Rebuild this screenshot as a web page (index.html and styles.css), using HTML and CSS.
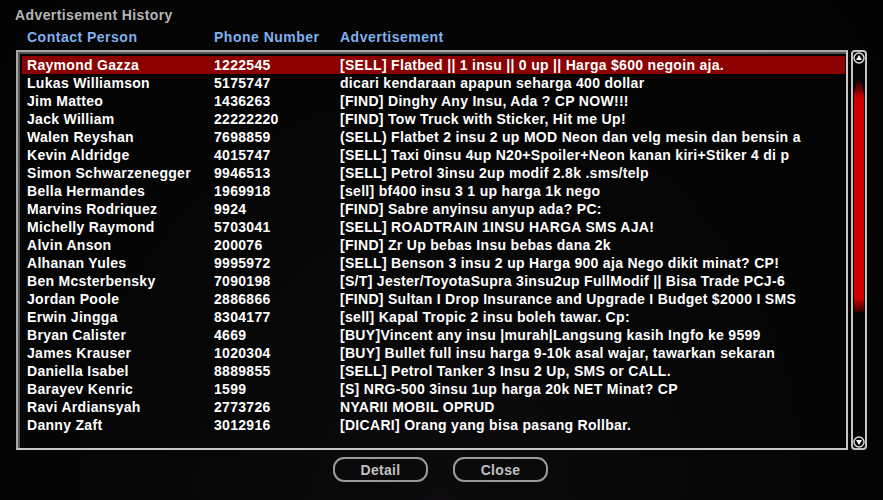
FILE: index.html
```html
<!DOCTYPE html>
<html lang="en">
<head>
  <meta charset="UTF-8" />
  <title>Advertisement History</title>
  <link rel="stylesheet" href="styles.css">
</head>
<body>
  <div class="dialog">
    <div class="title">Advertisement History</div>

    <div class="head">
      <span>Contact Person</span>
      <span>Phone Number</span>
      <span>Advertisement</span>
    </div>

    <div class="listwrap">
      <div class="list" id="list"></div>
      <div class="scroll">
        <div class="arrow up"><svg viewBox="0 0 12 12" width="12" height="12"><circle cx="6" cy="6" r="5" fill="none" stroke="#ddd" stroke-width="1.4"/><path d="M6 3 L9 8 L3 8 Z" fill="#fff"/></svg></div>
        <div class="track"><div class="thumb"></div></div>
        <div class="arrow down"><svg viewBox="0 0 12 12" width="12" height="12"><circle cx="6" cy="6" r="5" fill="none" stroke="#ddd" stroke-width="1.4"/><path d="M3 4 L9 4 L6 9 Z" fill="#fff"/></svg></div>
      </div>
    </div>

    <div class="buttons">
      <button>Detail</button>
      <button>Close</button>
    </div>
  </div>

  <script>
    const ads = [
      ['Raymond Gazza', '1222545', '[SELL] Flatbed || 1 insu || 0 up || Harga $600 negoin aja.'],
      ['Lukas Williamson', '5175747', 'dicari kendaraan apapun seharga 400 dollar'],
      ['Jim Matteo', '1436263', '[FIND] Dinghy Any Insu, Ada ? CP NOW!!!'],
      ['Jack William', '22222220', '[FIND] Tow Truck with Sticker, Hit me Up!'],
      ['Walen Reyshan', '7698859', '(SELL) Flatbet 2 insu 2 up MOD Neon dan velg mesin dan bensin a'],
      ['Kevin Aldridge', '4015747', '[SELL] Taxi 0insu 4up N20+Spoiler+Neon kanan kiri+Stiker 4 di p'],
      ['Simon Schwarzenegger', '9946513', '[SELL] Petrol 3insu 2up modif 2.8k .sms/telp'],
      ['Bella Hermandes', '1969918', '[sell] bf400 insu 3 1 up harga 1k nego'],
      ['Marvins Rodriquez', '9924', '[FIND] Sabre anyinsu anyup ada? PC:'],
      ['Michelly Raymond', '5703041', '[SELL] ROADTRAIN 1INSU HARGA SMS AJA!'],
      ['Alvin Anson', '200076', '[FIND] Zr Up bebas Insu bebas dana 2k'],
      ['Alhanan Yules', '9995972', '[SELL] Benson 3 insu 2 up Harga 900 aja Nego dikit minat? CP!'],
      ['Ben Mcsterbensky', '7090198', '[S/T] Jester/ToyotaSupra 3insu2up FullModif || Bisa Trade PCJ-6'],
      ['Jordan Poole', '2886866', '[FIND] Sultan I Drop Insurance and Upgrade I Budget $2000 I SMS'],
      ['Erwin Jingga', '8304177', '[sell] Kapal Tropic 2 insu boleh tawar. Cp:'],
      ['Bryan Calister', '4669', '[BUY]Vincent any insu |murah|Langsung kasih Ingfo ke 9599'],
      ['James Krauser', '1020304', '[BUY] Bullet full insu harga 9-10k asal wajar, tawarkan sekaran'],
      ['Daniella Isabel', '8889855', '[SELL] Petrol Tanker 3 Insu 2 Up, SMS or CALL.'],
      ['Barayev Kenric', '1599', '[S] NRG-500 3insu 1up harga 20k NET Minat? CP'],
      ['Ravi Ardiansyah', '2773726', 'NYARII MOBIL OPRUD'],
      ['Danny Zaft', '3012916', '[DICARI] Orang yang bisa pasang Rollbar.']
    ];

    const list = document.getElementById('list');
    ads.forEach((a, i) => {
      const row = document.createElement('div');
      row.className = i === 0 ? 'row selected' : 'row';
      row.innerHTML = `<span>${a[0]}</span><span>${a[1]}</span><span>${a[2]}</span>`;
      list.appendChild(row);
    });
  </script>
</body>
</html>
```

FILE: styles.css
```css
body {
  margin: 0;
  background: radial-gradient(ellipse at 50% 100%, #0c0a0c 0%, #050506 60%, #030304 100%);
  color: #fff;
  font-family: "Liberation Sans", Arial, sans-serif;
  font-weight: bold;
  width: 883px;
  height: 500px;
  overflow: hidden;
}
.dialog {
  padding: 5px 0 0 15px;
}
.title {
  color: #b4b4b4;
  font-size: 14px;
  letter-spacing: 0.4px;
  height: 20px;
  line-height: 20px;
}
.head {
  display: grid;
  grid-template-columns: 187px 126px 1fr;
  padding-left: 12px;
  height: 25px;
  line-height: 25px;
  color: #7fb1ee;
  font-size: 14px;
  letter-spacing: 0.5px;
}
.listwrap {
  display: flex;
  gap: 3px;
  height: 400px;
}
.list {
  width: 823px;
  height: 392px;
  border: 2px solid #a8a8a8;
  border-right-color: #c8c8c8;
  border-bottom-color: #c8c8c8;
  box-shadow: inset 2px 2px 0 #555;
  padding: 4px 1px 0 4px;
  margin-left: 1px;
}
.row {
  display: grid;
  grid-template-columns: 187px 126px 1fr;
  height: 18px;
  line-height: 18px;
  font-size: 14px;
  letter-spacing: 0.3px;
  padding-left: 5px;
  white-space: nowrap;
  overflow: hidden;
}
.row span {
  overflow: hidden;
}
.row.selected {
  background: #8b0000;
}
.scroll {
  width: 12px;
  height: 396px;
  border: 2px solid #c4c4c4;
  border-radius: 4px;
  display: flex;
  flex-direction: column;
}
.arrow {
  height: 12px;
  display: flex;
  justify-content: center;
}
.track {
  flex: 1;
  padding: 16px 1px 0;
}
.thumb {
  height: 232px;
  background: linear-gradient(#1a0000 0%, #d10000 8%, #d10000 94%, #300000 100%);
  clip-path: polygon(30% 0, 70% 0, 100% 6%, 100% 100%, 0 100%, 0 6%);
}
.buttons {
  display: flex;
  gap: 25px;
  padding-left: 318px;
  margin-top: 7px;
}
button {
  width: 95px;
  height: 25px;
  background: transparent;
  border: 2px solid #9a9a9a;
  border-radius: 11px;
  color: #c0c0c0;
  font-family: "Liberation Sans", Arial, sans-serif;
  font-weight: bold;
  font-size: 14px;
  letter-spacing: 0.3px;
}
```
